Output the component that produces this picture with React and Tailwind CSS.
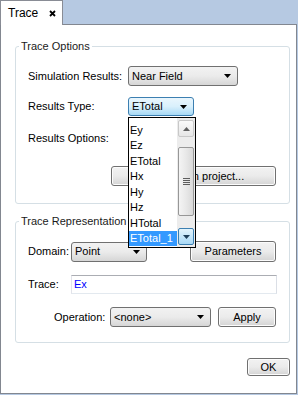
import React from "react";

const arrowDown = (
  <svg width="7" height="4" viewBox="0 0 7 4"><path d="M0 0h7L3.5 4z" fill="#000" /></svg>
);

function Combo({ value, width, focused }) {
  return (
    <div
      className={
        "flex items-center justify-between h-full rounded-[3px] border pl-[3px] pr-[6px] " +
        (focused
          ? "border-[#3c7fb1] bg-linear-to-b from-[#eaf6fd] via-[#d9f0fc] to-[#a7d9f5]"
          : "border-[#707070] bg-linear-to-b from-[#f2f2f2] via-[#ebebeb] to-[#d6d6d6]")
      }
      style={{ width }}
    >
      <span>{value}</span>
      {arrowDown}
    </div>
  );
}

function Button({ children, className = "" }) {
  return (
    <div
      className={
        "flex items-center justify-center rounded-[3px] border border-[#707070] bg-linear-to-b from-[#f2f2f2] via-[#ebebeb] to-[#d4d4d4] shadow-[inset_0_0_0_1px_#fcfcfc] " +
        className
      }
    >
      {children}
    </div>
  );
}

function Group({ title, className = "", children }) {
  return (
    <div className={"relative ml-[14px] w-[275px] rounded-[3px] border border-[#d5dfe5] " + className}>
      <span className="absolute left-[3px] top-[-8px] bg-white px-[2px] leading-[14px] text-[#1a1a1a]">{title}</span>
      {children}
    </div>
  );
}

const items = ["Ey", "Ez", "ETotal", "Hx", "Hy", "Hz", "HTotal", "ETotal_1"];

export default function App() {
  return (
    <div
      className="relative w-[298px] h-[395px] bg-[#b6c9e2] text-[11px] text-black overflow-hidden"
      style={{ fontFamily: '"Liberation Sans", Arial, sans-serif' }}
    >
      {/* tab strip */}
      <div className="h-[25px] flex items-end">
        <div className="relative z-10 h-[25px] w-[63px] bg-white border-t border-r border-l border-[#898c95] flex items-center pl-[7px] gap-[11px] text-[12px]">
          <span>Trace</span>
          <svg width="7" height="7" viewBox="0 0 7 7" className="mt-[1px]">
            <path d="M1 1l5 5M6 1L1 6" stroke="#000" strokeWidth="1.8" />
          </svg>
        </div>
      </div>

      {/* panel */}
      <div className="-mt-px w-[297px] h-[370px] bg-white border border-[#828790] flex flex-col">
        <Group title="Trace Options" className="mt-[21px] h-[158px] pl-[12px]">
          <div className="mt-[19px] h-[20px] flex items-center">
            <span className="w-[100px]">Simulation Results:</span>
            <Combo value="Near Field" width={110} />
          </div>
          <div className="mt-[11px] h-[19px] flex items-center">
            <span className="w-[100px]">Results Type:</span>
            <Combo value="ETotal" width={66} focused />
          </div>
          <div className="mt-[12px] h-[20px] flex items-center">
            <span>Results Options:</span>
          </div>
          <Button className="mt-[18px] ml-[83px] w-[165px] h-[20px]">Import from project...</Button>
        </Group>

        <Group title="Trace Representation" className="mt-[17px] h-[122px] pl-[12px]">
          <div className="mt-[19px] h-[21px] flex items-center">
            <span className="w-[43px]">Domain:</span>
            <div className="h-[20px]">
              <Combo value="Point" width={76} />
            </div>
            <Button className="ml-[43px] w-[86px] h-[21px]">Parameters</Button>
          </div>
          <div className="mt-[13px] h-[19px] flex items-center">
            <span className="w-[43px]">Trace:</span>
            <div className="h-[19px] w-[206px] border border-[#abadb3] border-b-[#e3e9ef] border-r-[#dbdfe6] border-l-[#e2e3ea] flex items-center pl-[2px] text-[#0000ff]">
              Ex
            </div>
          </div>
          <div className="mt-[13px] h-[20px] flex items-center pl-[26px]">
            <span className="w-[56px]">Operation:</span>
            <Combo value="<none>" width={101} />
            <Button className="ml-[7px] w-[58px] h-[20px]">Apply</Button>
          </div>
        </Group>

        <div className="mt-[15px] flex justify-end pr-[6px]">
          <Button className="w-[43px] h-[18px]">OK</Button>
        </div>
      </div>

      {/* open dropdown list */}
      <div className="absolute left-[128px] top-[117px] w-[68px] h-[131px] bg-white border border-black flex">
        <div className="w-[48px] flex flex-col pt-[4px]">
          {items.map((it, i) => (
            <div
              key={it}
              className={
                "h-[15.5px] flex items-center pl-[1px] " +
                (i === items.length - 1 ? "bg-[#3399ff] text-white" : "")
              }
            >
              {it}
            </div>
          ))}
        </div>
        <div className="w-[18px] bg-[#ececec] flex flex-col items-center pt-[2px] pb-[2px]">
          <div className="w-[16px] h-[17px] rounded-[2px] border border-[#c8c8c8] bg-linear-to-b from-[#fafafa] to-[#e6e6e6] flex items-center justify-center">
            <svg width="7" height="4" viewBox="0 0 7 4"><path d="M0 4h7L3.5 0z" fill="#606060" /></svg>
          </div>
          <div className="mt-[10px] w-[16px] h-[69px] rounded-[2px] border border-[#979797] bg-linear-to-r from-[#f4f4f4] via-[#e8e8e8] to-[#d9d9d9] flex flex-col items-center justify-center gap-[1px]">
            <div className="w-[7px] h-px bg-[#5d5d5d]" />
            <div className="w-[7px] h-px bg-[#5d5d5d]" />
            <div className="w-[7px] h-px bg-[#5d5d5d]" />
            <div className="w-[7px] h-px bg-[#5d5d5d]" />
          </div>
          <div className="flex-1" />
          <div className="w-[16px] h-[17px] rounded-[2px] border border-[#3c7fb1] bg-linear-to-b from-[#e3f4fc] to-[#a9d9f6] flex items-center justify-center">
            <svg width="7" height="4" viewBox="0 0 7 4"><path d="M0 0h7L3.5 4z" fill="#1e3f5a" /></svg>
          </div>
        </div>
      </div>
    </div>
  );
}
